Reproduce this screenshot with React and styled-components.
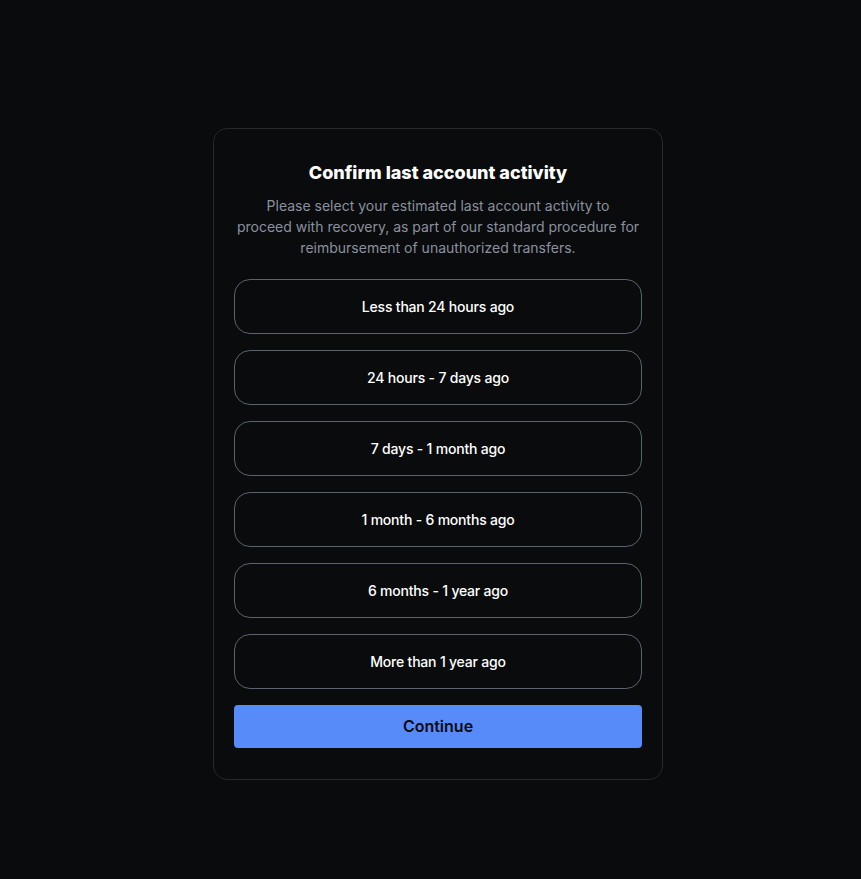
import React, { useState } from 'react';
import styled, { createGlobalStyle } from 'styled-components';

const GlobalStyle = createGlobalStyle`
	html, body {
		margin: 0;
		padding: 0;
		background: #0a0b0d;
	}
	body {
		font-family: Inter, "Noto Sans", sans-serif;
		color: #ffffff;
	}
`;

const options = [
	'Less than 24 hours ago',
	'24 hours - 7 days ago',
	'7 days - 1 month ago',
	'1 month - 6 months ago',
	'6 months - 1 year ago',
	'More than 1 year ago',
];

const App = () => {
	const [selected, setSelected] = useState(null);

	return (
		<>
			<GlobalStyle />
			<StyledPage>
				<StyledCard>
					<StyledTitle>Confirm last account activity</StyledTitle>
					<StyledText>
						Please select your estimated last account activity to
						<br />
						proceed with recovery, as part of our standard procedure for
						<br />
						reimbursement of unauthorized transfers.
					</StyledText>
					<StyledOptions>
						{options.map((label, i) => (
							<StyledOption
								key={label}
								$active={selected === i}
								onClick={() => setSelected(i)}
							>
								{label}
							</StyledOption>
						))}
					</StyledOptions>
					<StyledContinue>Continue</StyledContinue>
				</StyledCard>
			</StyledPage>
		</>
	);
};

const StyledPage = styled.div`
	min-height: 879px;
	display: flex;
	justify-content: center;
	align-items: flex-start;
	padding: 128px 0 0 15px;
	box-sizing: border-box;
`;

const StyledCard = styled.div`
	width: 450px;
	box-sizing: border-box;
	padding: 32px 20px 31px;
	border: 1px solid #26282c;
	border-radius: 14px;
	background: #0a0b0d;
	display: flex;
	flex-direction: column;
	align-items: center;
`;

const StyledTitle = styled.h2`
	margin: 0;
	font-size: 18px;
	line-height: 24px;
	font-weight: 800;
	color: #ffffff;
`;

const StyledText = styled.p`
	margin: 10px 0 0;
	width: 100%;
	font-size: 14px;
	line-height: 21px;
	color: #8a919e;
	text-align: center;
	white-space: nowrap;
`;

const StyledOptions = styled.div`
	width: 100%;
	margin-top: 21px;
	display: flex;
	flex-direction: column;
	gap: 16px;
`;

const StyledOption = styled.button`
	width: 100%;
	height: 55px;
	padding: 0 0 1px;
	border-radius: 16px;
	border: 1px solid ${(p) => (p.$active ? '#578bfa' : '#5b616e')};
	background: transparent;
	color: #ffffff;
	font-family: inherit;
	font-size: 14px;
	font-weight: 500;
	letter-spacing: -0.2px;
	cursor: pointer;
`;

const StyledContinue = styled.button`
	width: 100%;
	height: 43px;
	margin-top: 16px;
	padding: 0 0 1px;
	border: none;
	border-radius: 4px;
	background: #578bfa;
	color: #0a0b0d;
	font-family: inherit;
	font-size: 16px;
	font-weight: 600;
	cursor: pointer;
`;

export default App;
